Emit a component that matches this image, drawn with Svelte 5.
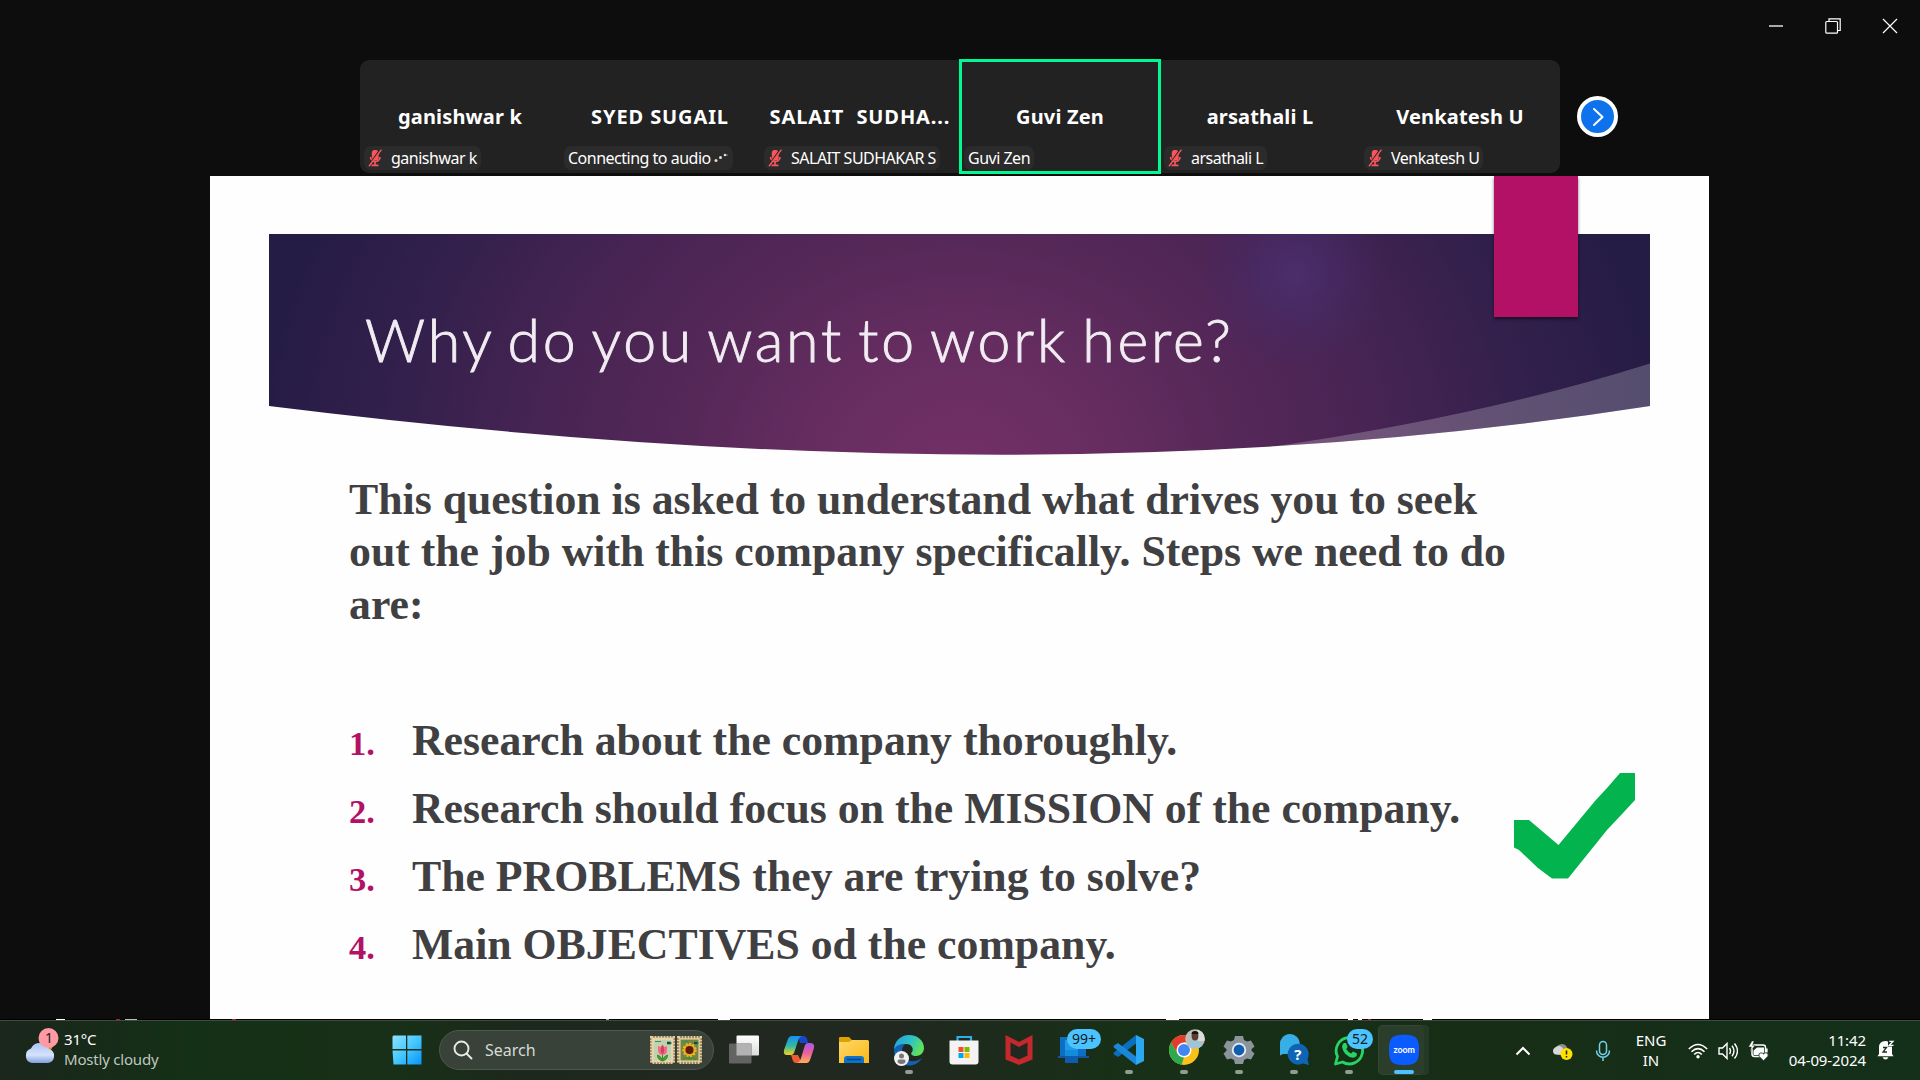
<script>
  const people = [
    { name: 'ganishwar k', label: 'ganishwar k', muted: true },
    { name: 'SYED SUGAIL', label: 'Connecting to audio', dots: true, caps: true },
    { name: 'SALAIT  SUDHA...', label: 'SALAIT SUDHAKAR S', muted: true, caps: true },
    { name: 'Guvi Zen', label: 'Guvi Zen', active: true },
    { name: 'arsathali L', label: 'arsathali L', muted: true },
    { name: 'Venkatesh U', label: 'Venkatesh U', muted: true }
  ];
  const intro = [
    'This question is asked to understand what drives you to seek',
    'out the job with this company specifically. Steps we need to do',
    'are:'
  ];
  const steps = [
    'Research about the company thoroughly.',
    'Research should focus on the MISSION of the company.',
    'The PROBLEMS they are trying to solve?',
    'Main OBJECTIVES od the company.'
  ];
  // Slivers of content visible along the top edge of the taskbar: [x, width, colour]
  const slivers = [
    [56, 9, '#fff'], [116, 4, '#c0104f'], [125, 12, '#bbb'], [232, 4, '#c0104f'],
    [606, 3, '#aaa'], [718, 12, '#fff'], [1166, 13, '#fff'], [1348, 5, '#fff'],
    [1358, 4, '#fff'], [1368, 3, '#c0104f'], [1423, 9, '#fff']
  ];
</script>

<div class="screen">
  <header class="titlebar">
    <svg width="16" height="16" viewBox="0 0 16 16"><path d="M1 8h14" stroke="#aaa" stroke-width="2" /></svg>
    <svg width="16" height="16" viewBox="0 0 16 16" fill="none" stroke="#fff" stroke-width="1.2"><rect x=".8" y="3.500" width="11.700" height="11.700" rx="1" /><path d="M4 3.500V.8h11.200v11.700h-2.700" /></svg>
    <svg width="16" height="16" viewBox="0 0 16 16" stroke="#fff" stroke-width="1.2"><path d="M1 1l14 14M15 1L1 15" /></svg>
  </header>

  <section class="gallery">
    <div class="strip">
      {#each people as p}
        <div class="tile" class:active={p.active}>
          <div class="name" class:caps={p.caps}>{p.name}</div>
          <div class="tag">
            {#if p.muted}
              <svg class="mic" width="14" height="18" viewBox="0 0 14 18"><rect x="3.800" y="1" width="6.800" height="10.500" rx="3" fill="#f9565c" /><path d="M2.500 8c0 6 9.500 6 9.500 0M7 12.500V16M3.500 16.300h7" fill="none" stroke="#f9565c" stroke-width="1.700" /><path d="M12.400.4L.6 16.600" stroke="#2a2a2a" stroke-width="1.800" /><path d="M13.400.6L1 17.200" stroke="#f9565c" stroke-width="1.500" /></svg>
            {/if}
            <span>{p.label}</span>
            {#if p.dots}
              <svg class="dots" width="16" height="12" viewBox="0 0 16 12" fill="#ddd"><circle cx="3" cy="8.500" r="1.500" /><circle cx="7.500" cy="5.500" r="1.500" /><circle cx="12" cy="3" r="1.300" /><circle cx="14" cy="3" r=".6" /></svg>
            {/if}
          </div>
        </div>
      {/each}
    </div>
    <button class="next" aria-label="Next">
      <svg width="20" height="20" viewBox="0 0 20 20" fill="none" stroke="#fff" stroke-width="2" stroke-linecap="round" stroke-linejoin="round"><path d="M6 2l8.500 8L6 18" /></svg>
    </button>
  </section>

  <main class="slide">
    <div class="banner">
      <svg class="shape" width="1381" height="222" viewBox="269 234 1381 222">
        <defs>
          <radialGradient id="base" gradientUnits="userSpaceOnUse" cx="0" cy="0" r="1" gradientTransform="translate(960 475) scale(700 600)">
            <stop offset="0" stop-color="#733066" />
            <stop offset=".2" stop-color="#672d61" />
            <stop offset=".4" stop-color="#552858" />
            <stop offset=".6" stop-color="#472453" />
            <stop offset=".8" stop-color="#34204c" />
            <stop offset="1" stop-color="#251c46" />
          </radialGradient>
          <radialGradient id="glow" gradientUnits="userSpaceOnUse" cx="1295" cy="275" r="95">
            <stop offset="0" stop-color="#4b3070" stop-opacity=".85" />
            <stop offset="1" stop-color="#43296a" stop-opacity="0" />
          </radialGradient>
          <clipPath id="curve"><path d="M269 234H1650V406Q1336 454.700 1000 454.700Q659 454.700 269 406Z" /></clipPath>
        </defs>
        <g clip-path="url(#curve)">
          <rect x="269" y="234" width="1381" height="222" fill="url(#base)" />
          <rect x="1150" y="234" width="300" height="180" fill="url(#glow)" />
          <path d="M1650 363.500Q1480 417 1270 447L1300 456H1650Z" fill="#fff" fill-opacity=".22" />
        </g>
      </svg>
      <h1>Why do you want to work here?</h1>
    </div>
    <div class="ribbon"></div>

    <div class="content">
      <p class="intro">
        {#each intro as line}<span>{line}</span>{/each}
      </p>
      <div class="row">
        <ol>
          {#each steps as s, i}
            <li><b class="num">{i + 1}.</b><span>{s}</span></li>
          {/each}
        </ol>
        <svg class="check" width="121" height="106" viewBox="0 0 121 106"><path d="M0 47H15L44.500 72L81 28L93 15L106 0H121V27L109 40L93 57L54 105.500H38L24 95L5 77L0 74.500Z" fill="#03b44e" /></svg>
      </div>
    </div>
  </main>

  <svg class="seam" width="1920" height="1" viewBox="0 0 1920 1">
    <rect width="1920" height="1" fill="#000" />
    {#each slivers as [x, w, c]}<rect {x} width={w} height="1" fill={c} />{/each}
  </svg>

  <footer class="taskbar">
    <div class="weather">
      <svg width="36" height="40" viewBox="0 0 36 40">
        <defs><linearGradient id="cl" x1="0" y1="0" x2="0" y2="1"><stop offset="0" stop-color="#a9c5f8" /><stop offset=".6" stop-color="#d6e3fb" /><stop offset="1" stop-color="#7f9fdc" /></linearGradient></defs>
        <circle cx="23" cy="18" r="6" fill="#f08a18" />
        <path d="M8 36a7.500 7.500 0 0 1-1-14.500A10 10 0 0 1 25 22a7.200 7.200 0 0 1-1 14Z" fill="url(#cl)" />
        <circle cx="24.500" cy="11" r="10" fill="#ff99a4" />
        <text x="25" y="16" text-anchor="middle" font-size="14" fill="#222">1</text>
      </svg>
      <div class="wtext"><span>31°C</span><span class="dim">Mostly cloudy</span></div>
    </div>

    <div class="apps">
      <svg class="win" width="30" height="30" viewBox="0 0 30 30"><defs><linearGradient id="w" x1="0" y1="0" x2="1" y2="1"><stop offset="0" stop-color="#8ee2ff" /><stop offset=".5" stop-color="#45c8ff" /><stop offset="1" stop-color="#0793fb" /></linearGradient></defs><path d="M1.500.5H14v13.600H.5V1.500ZM15.300.5H29.500V14.100H15.300ZM.5 15.500H14V29.500H1.500ZM15.300 15.500H29.500V29.500H15.300Z" fill="url(#w)" /></svg>

      <div class="search">
        <svg width="20" height="20" viewBox="0 0 20 20" fill="none" stroke="#e6eae6" stroke-width="1.900"><circle cx="8.500" cy="8.500" r="7" /><path d="M13.500 13.500l5 5" stroke-linecap="round" /></svg>
        <span>Search</span>
        <svg class="stamps" width="52" height="28" viewBox="0 0 52 28">
          <rect x="1.500" y="1.500" width="22" height="25" fill="#c9cfae" stroke="#efc793" stroke-width="3" stroke-dasharray="2 1" />
          <rect x="3" y="3" width="19" height="22" fill="#c3d2ae" stroke="#f3ddb8" />
          <path d="M12.500 25v-7M12.500 25q-5-1-5-6q4 1 5 6q1-5 5-6q0 5-5 6" stroke="#3c8e2d" fill="#46a335" />
          <path d="M8 10l2.500 1 2-2.500 2 2.500 2.500-1v5q-.5 4-4.500 4T8 15Z" fill="#ee6c85" />
          <path d="M12.500 9q3.500 5 0 9.500q-3.500-4.500 0-9.500" fill="#d93c5e" />
          <path d="M5 5.500h6M17 6h4v2h-4" stroke="#359363" />
          <rect x="28.500" y="1.500" width="22" height="25" fill="#6f8142" stroke="#efc793" stroke-width="3" stroke-dasharray="2 1" />
          <rect x="30" y="3" width="19" height="22" fill="#728643" stroke="#f3ddb8" />
          <path d="M33 24q3-4 6.500-1q3-3 6.500 1M39.500 18v6" stroke="#3c8e2d" fill="none" />
          <circle cx="39.500" cy="14" r="6" fill="#eba51e" stroke="#f2b423" stroke-width="2.500" stroke-dasharray="2 1.400" />
          <circle cx="39.500" cy="14" r="4" fill="#5b1d10" />
          <path d="M32 5.500h6M44 6h4v2h-4" stroke="#359363" />
        </svg>
      </div>

      <div class="app"><svg width="32" height="32" viewBox="0 0 32 32"><defs><linearGradient id="tv" x1="0" y1="0" x2="0" y2="1"><stop offset="0" stop-color="#fff" /><stop offset="1" stop-color="#dcdcdc" /></linearGradient></defs><rect x="8.500" y="1.500" width="22.500" height="20" rx="1" fill="url(#tv)" /><rect x="1" y="9.500" width="22.500" height="20" rx="1" fill="#636363" /><rect x="8.500" y="9.500" width="15" height="12" fill="#b3b3b3" /></svg></div>

      <div class="app"><svg width="32" height="32" viewBox="0 0 32 32"><defs>
        <linearGradient id="c1" x1="0" y1="0" x2="0" y2="1"><stop offset="0" stop-color="#1d8df0" /><stop offset=".5" stop-color="#2bb8a8" /><stop offset="1" stop-color="#f4d21c" /></linearGradient>
        <linearGradient id="c2" x1="0" y1="0" x2="0" y2="1"><stop offset="0" stop-color="#a65af0" /><stop offset=".5" stop-color="#ee5f9c" /><stop offset="1" stop-color="#ffb155" /></linearGradient></defs>
        <path d="M8 21h7l4 8h-6q-3 0-4-5" fill="#ee5a34" /><path d="M15 2h6q3 0 4 7h-8" fill="#1746c8" />
        <path d="M9 2h10q-3 1-4 5l-4 12q-1 2-3 2H4q-4 0-3-5L5 5q1-3 4-3" fill="url(#c1)" />
        <path d="M24 29H14q3-1 4-5l4-13q1-2 3-2h2q5 0 4 5l-4 12q-1 3-3 3" fill="url(#c2)" /></svg></div>

      <div class="app"><svg width="32" height="32" viewBox="0 0 32 32"><defs><linearGradient id="f" x1="0" y1="0" x2="1" y2="1"><stop offset="0" stop-color="#ffd86b" /><stop offset="1" stop-color="#fbb814" /></linearGradient></defs><path d="M1 4q0-1 1-1h9l3 3h16v5H1Z" fill="#e0a100" /><path d="M1 8h10l3-2h15q2 0 2 1.500V29H1Z" fill="url(#f)" /><path d="M6 29v-4q0-3 3-3h14q3 0 3 3v4Z" fill="#0f72c9" /><path d="M9 25.500h14" stroke="#07458a" stroke-width="1.500" /></svg></div>

      <div class="app"><svg width="32" height="32" viewBox="0 0 32 32"><defs><linearGradient id="e" x1="0" y1="0" x2="1" y2=".4"><stop offset="0" stop-color="#1e9de0" /><stop offset=".6" stop-color="#2fc4c4" /><stop offset="1" stop-color="#5fe05f" /></linearGradient></defs>
        <path d="M1 16C1 8 7 1 16 1s15 6 15 13c0 5-4 8-8 8-4 0-6-2-4-4 2-3 0-8-6-8C7 10 2 13 1 16" fill="url(#e)" />
        <path d="M1 16C2 12 7 10 12 10c-4 3-5 14 5 17 5 1 9-1 12-3-3 5-8 7.500-13 7.500C7 31.500 1 24 1 16" fill="#1261b5" />
        <circle cx="8.500" cy="24.500" r="7.500" fill="#f2f2f2" /><circle cx="8.500" cy="22" r="2.500" fill="#777" /><path d="M4.500 27q0-1.500 1.500-1.500h5q1.500 0 1.500 1.500 0 3-4 3t-4-3" fill="#777" /></svg><i></i></div>

      <div class="app"><svg width="32" height="32" viewBox="0 0 32 32"><path d="M9.500 8V3h13.500v5" fill="none" stroke="#2ab0ea" stroke-width="2.200" /><path d="M1.500 6.500h29v21q0 3-3 3h-23q-3 0-3-3Z" fill="#f3f3f3" /><path d="M10.500 13h5v5h-5Z" fill="#f25022" /><path d="M16.500 13h5v5h-5Z" fill="#7fba00" /><path d="M10.500 19h5v5h-5Z" fill="#00a4ef" /><path d="M16.500 19h5v5h-5Z" fill="#ffb900" /></svg></div>

      <div class="app"><svg width="32" height="32" viewBox="0 0 32 32"><path d="M2.500 1L16 8l13.500-7v24.500L16 31 2.500 25.500Z" fill="#c5282d" /><path d="M7.500 8.500L16 13l8.500-4.500v13L16 25.500l-8.500-4Z" fill="#202820" /></svg></div>

      <div class="app"><svg width="32" height="32" viewBox="0 0 32 32"><rect x="2" y="3" width="26" height="20" fill="#0c6fc4" /><path d="M0 22h31v2H0Z" fill="#13579a" /><rect x="7" y="6" width="13" height="17" fill="#1b9bea" /><rect x="7" y="16" width="13" height="13" fill="#0d5cae" /><rect x="7" y="16" width="13" height="6" fill="#158bdc" /></svg><em class="badge wide">99+</em></div>

      <div class="app"><svg width="32" height="32" viewBox="0 0 32 32"><path d="M23 1l8 4v22l-8 4Z" fill="#2aa8f2" /><path d="M23 1v8.500L5 23l-4-2.500q-1-1 0-2Z" fill="#0b6fc0" /><path d="M23 31v-8.500L5 9l-4 2.500q-1 1 0 2Z" fill="#1a87d8" /></svg><i></i></div>

      <div class="app"><svg width="32" height="32" viewBox="0 0 32 32"><circle cx="16" cy="16" r="15" fill="#fbc116" /><path d="M3 8.500A15 15 0 0 1 29 8.500H16L9.500 19.700Z" fill="#e33b2e" /><path d="M3 8.500L9.500 19.700 16 23.500 13.500 30.800A15 15 0 0 1 3 8.500" fill="#2da94f" /><circle cx="16" cy="16" r="7.500" fill="#fff" /><circle cx="16" cy="16" r="6" fill="#4285f4" /></svg>
        <svg class="avatar" width="20" height="20" viewBox="0 0 20 20"><clipPath id="av"><circle cx="10" cy="10" r="9.800" /></clipPath><g clip-path="url(#av)"><rect width="20" height="20" fill="#bdbdb9" /><rect x="12" width="8" height="12" fill="#dcdcdc" /><path d="M2 20q0-9 8-9t8 9" fill="#9fc4d6" /><ellipse cx="10" cy="7" rx="3.400" ry="4.500" fill="#5b3d30" /><path d="M6.500 5q0-3 3.500-3t3.500 3Z" fill="#151515" /></g></svg><i></i></div>

      <div class="app"><svg width="32" height="32" viewBox="0 0 32 32"><path d="M12 2h8l1 4 3 1.600 4-1.200 3.500 6-3 2.800v1.600l3 2.800-3.500 6-4-1.200-3 1.600-1 4h-8l-1-4-3-1.600-4 1.200-3.500-6 3-2.800v-1.600l-3-2.800 3.500-6 4 1.200 3-1.600Z" fill="#8b949c" /><circle cx="16" cy="16" r="7.200" fill="#e6eef3" /><circle cx="16" cy="16" r="5.400" fill="#0f5fae" /></svg><i></i></div>

      <div class="app"><svg class="help" width="32" height="32" viewBox="0 0 32 32"><path d="M2 21.500L2 11A10 10 0 1 1 11 20H5Z" fill="#38aee6" /><path d="M31 31l-1.500-6A10.500 10.500 0 1 0 25 29.500Z" fill="#0e65b5" /><text x="19.800" y="25.500" text-anchor="middle" font-size="15" font-weight="700" fill="#fff">?</text></svg><i></i></div>

      <div class="app"><svg width="32" height="32" viewBox="0 0 32 32"><path d="M2.500 30l2-7.500A13.200 13.200 0 1 1 9.500 28Z" fill="none" stroke="#25d366" stroke-width="2.800" stroke-linejoin="round" /><path d="M11 9l2 0 1.700 4-1.500 2q2 3.500 5 4.500l1.800-2 4 2q0 4-4 4.200Q11 22.500 9 13q0-3 2-4" fill="#25d366" /></svg><em class="badge">52</em><i></i></div>

      <div class="app current"><svg width="32" height="32" viewBox="0 0 32 32"><path d="M16 .8C28 .8 31 4 31 16S28 31 16 31 1 28 1 16 4 .8 16 .8" fill="#0b5cff" /><text class="zm" x="5.500" y="18.500" font-size="8.800" font-weight="700" fill="#fff" textLength="21.500" lengthAdjust="spacingAndGlyphs">zoom</text></svg><i></i></div>
    </div>

    <div class="tray">
      <svg width="16" height="10" viewBox="0 0 16 10" fill="none" stroke="#fff" stroke-width="2"><path d="M1.500 8.500L8 2l6.500 6.500" /></svg>
      <svg class="cloud" width="22" height="20" viewBox="0 0 22 20"><path d="M5 8A6 6 0 0 1 16 6l2 8H6Z" fill="#8b908b" /><path d="M4 13.500a4 4 0 0 1 0-7 5 5 0 0 1 8 1l2 6Z" fill="#d7d7d7" /><circle cx="15.500" cy="13" r="6" fill="#ffe100" /><path d="M15.500 9.500v4M15.500 15v1.500" stroke="#222" stroke-width="1.500" /></svg>
      <svg class="tmic" width="16" height="22" viewBox="0 0 16 22" fill="none" stroke="#6fd3ea" stroke-width="1.500"><rect x="4.500" y="1.500" width="7" height="13" rx="3.500" /><path d="M1.500 10.500c0 9 13 9 13 0M8 17.500V21" /></svg>
      <div class="lang"><span>ENG</span><span>IN</span></div>
      <svg class="wifi" width="20" height="16" viewBox="0 0 20 16" fill="none" stroke="#fff" stroke-width="1.600"><path d="M.8 6Q10-3 19.200 6M3.500 8.800Q10 2.300 16.500 8.800M6.200 11.500Q10 7.500 13.800 11.500" /><circle cx="10" cy="13.800" r="1.700" fill="#fff" stroke="none" /></svg>
      <svg class="vol" width="20" height="18" viewBox="0 0 20 18" fill="none" stroke="#fff" stroke-width="1.400"><path d="M1 6h3.500L9 1.500v15L4.500 12H1ZM11.500 6q2 3 0 6M14 3.800q4 5.200 0 10.400M16.500 1.500q6 7.500 0 15" /></svg>
      <svg class="bat" width="21" height="20" viewBox="0 0 21 20"><rect x="4" y="4" width="13.500" height="11.500" rx="2.500" fill="none" stroke="#fff" stroke-width="1.500" /><path d="M5.500 14V9.500L9 6.500h7v5l-4 2.500Z" fill="#fff" /><path d="M18.800 7.500v4" stroke="#fff" stroke-width="1.600" /><path d="M4 0L.5 6h3L2 10.500 7 4.500H4.500L6 0Z" fill="#fff" stroke="#17301a" stroke-width=".4" /><path d="M15.500 19.800L11 15.200q-1-3 2-3.400 1.500 0 2.500 1.300 1-1.300 2.500-1.300 3 .4 2 3.400Z" fill="#fff" stroke="#17301a" stroke-width=".8" /></svg>
      <div class="clock"><span>11:42</span><span>04-09-2024</span></div>
      <svg class="bell" width="18" height="20" viewBox="0 0 18 20"><path d="M2 14V7.500Q2 1 8.500 1q1.500 0 2.500.5V6.500h4V14l1.500 2.200H.5Z" fill="#fff" /><path d="M5.500 17.200h6q-1 2.300-3 2.300t-3-2.300" fill="#fff" /><path d="M6 7.500h3.500l-3.500 4.500h4" fill="none" stroke="#17301a" stroke-width="1.300" /><path d="M12.300 1.300H16L12.300 5.300h4.200" fill="none" stroke="#fff" stroke-width="1.300" /></svg>
    </div>
  </footer>
</div>

<style>
  :global(body) { margin: 0; background: #0d0d0d; }
  .screen { width: 1920px; height: 1080px; display: flex; flex-direction: column; background: #0d0d0d; overflow: hidden; font-family: "Noto Sans", "Open Sans", sans-serif; color: #fff; }
  svg { display: block; flex: none; }
  .titlebar { height: 60px; box-sizing: border-box; display: flex; justify-content: flex-end; gap: 41px; padding: 18px 22px 0 0; flex: none; }
  .gallery { height: 116px; display: flex; padding-left: 360px; flex: none; box-sizing: border-box; }
  .strip { width: 1200px; height: 113px; background: #222; border-radius: 9px; display: flex; }
  .tile { width: 200px; height: 113px; box-sizing: border-box; position: relative; padding-top: 43px; }
  .tile.active { outline: 3px solid #00fa92; outline-offset: -2px; }
  .name { font-weight: 700; font-size: 20px; line-height: 28px; letter-spacing: .15px; text-align: center; white-space: pre; }
  .name.caps { letter-spacing: .9px; }
  .tag { position: absolute; left: 4px; bottom: 3px; height: 24px; display: flex; align-items: center; gap: 9px; padding: 0 4px; border-radius: 7px; background: #2b2b2b; font-size: 16px; letter-spacing: -.5px; white-space: nowrap; }
  .dots { margin-left: -7px; }
  .next { margin: 36px 0 0 17px; width: 41px; height: 41px; box-sizing: border-box; border: 4px solid #fff; border-radius: 50%; background: #0e72ed; padding: 0 0 0 7px; display: flex; align-items: center; }

  .slide { position: relative; width: 1499px; height: 843px; margin-left: 210px; background: #fefefe; flex: none; box-sizing: border-box; padding: 58px 59px 0; display: flex; flex-direction: column; }
  .banner { display: grid; height: 222px; }
  .shape, h1 { grid-area: 1 / 1; }
  h1 { margin: 66px 0 0 96px; font-family: "Century Gothic", "URW Gothic", Lato, sans-serif; font-weight: 300; font-size: 59px; line-height: 80px; letter-spacing: 2.8px; word-spacing: -4.500px; -webkit-text-stroke: .9px #f1ecf2; color: #f1ecf2; white-space: nowrap; }
  .ribbon { position: absolute; left: 1283.500px; top: 0; width: 84.500px; height: 140.500px; background: #b31166; box-shadow: 0 2px 3px #0008; clip-path: inset(0 -5px -8px -5px); }
  .content { padding-left: 80px; color: #404042; font-family: "Liberation Serif", serif; font-weight: 700; font-size: 43.750px; }
  .intro { margin: 17px 0 0; display: flex; flex-direction: column; }
  .intro span { line-height: 52.300px; height: 52.300px; white-space: nowrap; }
  .row { display: flex; margin-top: 76px; }
  ol { margin: 0; padding: 0; list-style: none; width: 1165px; }
  li { display: flex; align-items: baseline; height: 68px; line-height: 68px; white-space: nowrap; }
  .num { width: 63px; font-size: 34.500px; color: #b31166; }
  .check { margin-top: 67px; }

  .taskbar { height: 60px; box-sizing: border-box; border-top: 1px solid #3f4d41; flex: none; display: flex; position: relative; background: linear-gradient(90deg, #1b261c 0, #143016 190px, #183017 400px, #1c281c 520px, #21281f 700px, #20281f 900px, #183017 1120px, #172d16 1500px, #14301a 1920px); }
  .weather { width: 392px; display: flex; padding: 6px 0 0 24px; gap: 4px; box-sizing: border-box; flex: none; }
  .weather svg { width: 36px; }
  .wtext { display: flex; flex-direction: column; font-size: 15px; line-height: 20px; padding-top: 2px; letter-spacing: -.2px; }
  .dim { color: #bfc7bf; }
  .apps { display: flex; align-items: center; flex: none; padding-bottom: 1px; }
  .win { margin-right: 17px; }
  .search { width: 275px; height: 40px; margin: 0 2px 0 0; box-sizing: border-box; border: 1px solid #4d584e; border-radius: 20px; background: #384238; display: flex; align-items: center; padding: 0 11px 0 13px; font-size: 16px; color: #d5dad5; }
  .search span { margin-left: 12px; flex: 1; }
  .app { width: 51px; height: 50px; margin: 0 2px; position: relative; display: flex; align-items: center; justify-content: center; border-radius: 5px; }
  .app i { position: absolute; bottom: 1px; left: 22px; width: 8px; height: 4px; border-radius: 2px; background: #929c92; }
  .app.current { background: #2b3e2b; box-shadow: inset -5px 0 0 #263926, inset 0 0 0 1px #334633; }
  .app.current i { background: #4cc2ff; width: 20px; left: 16px; }
  .zm { font-family: Lato, sans-serif; }
  .badge { position: absolute; top: 4px; left: 24px; height: 20px; line-height: 20px; min-width: 26px; text-align: center; background: #4cc2ff; color: #101c24; border-radius: 10px; font-size: 14px; font-style: normal; }
  .badge.wide { width: 34px; left: 19px; }
  .avatar { position: absolute; top: 4px; right: 4px; }
  .tray { margin-left: auto; display: flex; align-items: center; padding-right: 25px; font-size: 15px; line-height: 20px; flex: none; }
  .cloud { margin-left: 20px; }
  .tmic { margin-left: 22px; }
  .lang { margin-left: 24px; display: flex; flex-direction: column; align-items: center; width: 32px; padding-bottom: 2px; }
  .wifi { margin-left: 21px; }
  .vol { margin-left: 10px; }
  .bat { margin-left: 10px; }
  .clock { margin-left: 17px; width: 80px; display: flex; flex-direction: column; align-items: flex-end; white-space: nowrap; letter-spacing: -.1px; padding-bottom: 2px; }
  .bell { margin-left: 11px; margin-bottom: 1px; }
</style>
